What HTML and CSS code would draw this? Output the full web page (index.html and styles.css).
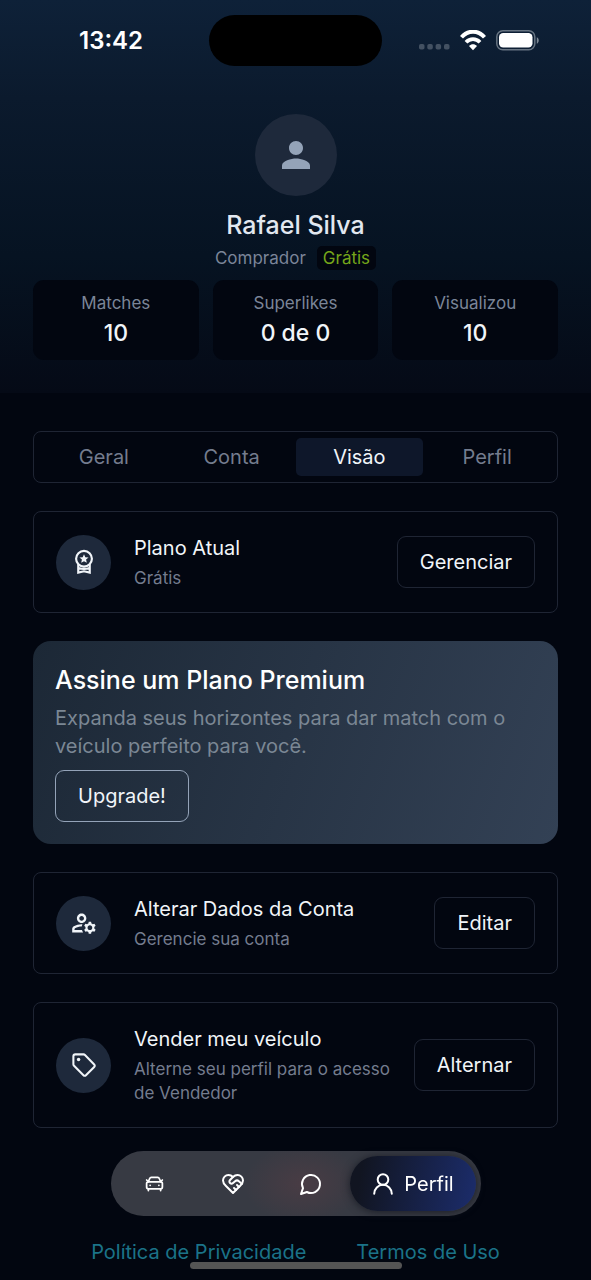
FILE: index.html
```html
<!DOCTYPE html>
<html lang="pt-BR">
<head>
<meta charset="utf-8">
<meta name="viewport" content="width=device-width, initial-scale=1">
<title>Perfil</title>
<link rel="stylesheet" href="styles.css">
</head>
<body>
<header class="hero">
  <div class="status">
    <time class="clock">13:42</time>
    <span class="island"></span>
    <div class="indicators">
      <svg class="signal" viewBox="0 0 31 6" fill="#435162"><rect width="5.5" height="5.5" rx="1.8"/><rect x="8.3" width="5.5" height="5.5" rx="1.8"/><rect x="16.6" width="5.5" height="5.5" rx="1.8"/><rect x="25" width="5.5" height="5.5" rx="1.8"/></svg>
      <svg class="wifi" viewBox="0 0 26 21" fill="none" stroke="#fff"><path d="M1.500 7.200C8-.2 18-.2 24.500 7.200" stroke-width="4"/><path d="M6 12.200c4-4.200 10-4.200 14 0" stroke-width="3.800"/><path d="M9 15.900c2.400-2.300 5.600-2.300 8 0l-4 4.300z" fill="#fff" stroke="none"/></svg>
      <svg class="battery" viewBox="0 0 44 21"><rect x=".8" y=".8" width="38" height="19" rx="6" fill="none" stroke="#667381" stroke-width="1.500"/><rect x="3" y="3" width="33.500" height="14.600" rx="4.200" fill="#fff"/><path d="M40.800 7.300c2.600 1 2.600 5.400 0 6.400z" fill="#7d8894"/></svg>
    </div>
  </div>
  <div class="profile">
    <span class="avatar"><svg viewBox="0 0 24 24" fill="#94a3b8"><path d="M12 12c2.210 0 4-1.790 4-4s-1.790-4-4-4-4 1.790-4 4 1.790 4 4 4zm0 2c-2.670 0-8 1.340-8 4v2h16v-2c0-2.660-5.330-4-8-4z"/></svg></span>
    <h1 class="name">Rafael Silva</h1>
    <p class="role">Comprador <span class="badge">Grátis</span></p>
  </div>
  <dl class="stats">
    <div class="stat"><dt>Matches</dt><dd>10</dd></div>
    <div class="stat"><dt>Superlikes</dt><dd>0 de 0</dd></div>
    <div class="stat"><dt>Visualizou</dt><dd>10</dd></div>
  </dl>
</header>
<main class="content">
  <div class="tabs" role="tablist">
    <button class="tab" role="tab" aria-selected="false">Geral</button>
    <button class="tab" role="tab" aria-selected="false">Conta</button>
    <button class="tab active" role="tab" aria-selected="true">Visão</button>
    <button class="tab" role="tab" aria-selected="false">Perfil</button>
  </div>
  <section class="card">
    <span class="card-icon"><svg viewBox="0 0 24 24" fill="none" stroke="#f1f5f9" stroke-width="2"><circle cx="12" cy="9" r="7.300"/><path d="M6.700 14v7.800l5.300-1.200 5.300 1.200V14M7 17.500c3 1.100 7 1.100 10 0"/><path d="M12 4.800l1.200 2.700 3 .3-2.300 2 .7 2.900-2.600-1.500-2.600 1.500.7-2.900-2.300-2 3-.3z" fill="#f1f5f9" stroke="none"/></svg></span>
    <div class="card-text"><h2>Plano Atual</h2><p>Grátis</p></div>
    <button class="btn">Gerenciar</button>
  </section>
  <section class="premium">
    <h2>Assine um Plano Premium</h2>
    <p>Expanda seus horizontes para dar match com o veículo perfeito para você.</p>
    <button class="btn light">Upgrade!</button>
  </section>
  <section class="card">
    <span class="card-icon"><svg viewBox="1 1 22 22" fill="#f1f5f9"><path d="M4 18v-.65c0-.34.16-.66.41-.81C6.100 15.530 8.030 15 10 15c.03 0 .05 0 .08.010.1-.7.3-1.370.59-1.980-.22-.02-.44-.03-.67-.03-2.420 0-4.680.67-6.610 1.820-.88.52-1.390 1.500-1.390 2.530V20h9.260c-.42-.6-.75-1.280-.97-2H4zM10 12c2.210 0 4-1.790 4-4s-1.790-4-4-4-4 1.790-4 4 1.790 4 4 4zm0-6c1.100 0 2 .9 2 2s-.9 2-2 2-2-.9-2-2 .9-2 2-2zM20.750 16c0-.22-.03-.42-.06-.63l1.140-1.010-1-1.730-1.450.49c-.32-.27-.68-.48-1.080-.63L18 11h-2l-.3 1.490c-.4.15-.76.36-1.080.63l-1.450-.49-1 1.730 1.140 1.010c-.03.21-.06.41-.06.63s.03.42.06.63l-1.140 1.010 1 1.730 1.450-.49c.32.27.68.48 1.080.63L16 21h2l.3-1.490c.4-.15.76-.36 1.080-.63l1.450.49 1-1.730-1.140-1.010c.03-.21.06-.41.06-.63zM17 18c-1.100 0-2-.9-2-2s.9-2 2-2 2 .9 2 2-.9 2-2 2z"/></svg></span>
    <div class="card-text"><h2>Alterar Dados da Conta</h2><p>Gerencie sua conta</p></div>
    <button class="btn">Editar</button>
  </section>
  <section class="card">
    <span class="card-icon"><svg viewBox="0 0 24 24" fill="none" stroke="#f1f5f9" stroke-width="1.900" stroke-linejoin="round"><path d="M2.200 4c0-1 .8-1.800 1.800-1.800h7.500c.6 0 1 .2 1.400.6l8.500 8.700c.7.700.7 1.600 0 2.300l-7.600 7.600c-.7.700-1.600.7-2.300 0l-8.700-8.700c-.4-.4-.6-.8-.6-1.400z"/><circle cx="7" cy="7" r="1.600" fill="#f1f5f9" stroke="none"/></svg></span>
    <div class="card-text"><h2>Vender meu veículo</h2><p>Alterne seu perfil para o acesso de Vendedor</p></div>
    <button class="btn">Alternar</button>
  </section>
</main>
<footer class="legal">
  <a href="#privacidade">Política de Privacidade</a>
  <a href="#termos">Termos de Uso</a>
</footer>
<nav class="dock" aria-label="Principal">
  <a class="dock-item" href="#carros" aria-label="Carros"><svg class="small" viewBox="0 0 24 24" fill="none" stroke="#fff" stroke-width="2" stroke-linecap="round" stroke-linejoin="round"><path d="m21 8-2 2-1.500-3.700A2 2 0 0 0 15.646 5H8.400a2 2 0 0 0-1.903 1.257L5 10 3 8M7 14h.01M17 14h.01M5 18v2M19 18v2"/><rect width="18" height="8" x="3" y="10" rx="2"/></svg></a>
  <a class="dock-item" href="#matches" aria-label="Matches"><svg viewBox="0 0 24 24" fill="none" stroke="#fff" stroke-width="2" stroke-linecap="round" stroke-linejoin="round"><path d="M19 14c1.490-1.460 3-3.210 3-5.500A5.500 5.500 0 0 0 16.500 3c-1.760 0-3 .5-4.500 2-1.500-1.500-2.740-2-4.500-2A5.500 5.500 0 0 0 2 8.500c0 2.300 1.500 4.050 3 5.500l7 7Z"/><path d="M12 5 9.040 7.960a2.170 2.170 0 0 0 0 3.080c.82.820 2.130.850 3 .070l2.070-1.900a2.820 2.820 0 0 1 3.790 0l2.960 2.660M18 15l-2-2M15 18l-2-2"/></svg></a>
  <a class="dock-item" href="#mensagens" aria-label="Mensagens"><svg viewBox="0 0 24 24" fill="none" stroke="#fff" stroke-width="2" stroke-linecap="round" stroke-linejoin="round"><path d="M7.900 20A9 9 0 1 0 4 16.100L2 22Z"/></svg></a>
  <a class="dock-item current" href="#perfil" aria-current="page"><svg viewBox="0 0 24 24" fill="none" stroke="#fff" stroke-width="2" stroke-linecap="round"><circle cx="12" cy="7.500" r="5.300"/><path d="M3.200 21.800c0-5 4-9 8.800-9s8.800 4 8.800 9"/></svg>Perfil</a>
</nav>
<div class="home-bar"></div>
</body>
</html>
```
FILE: styles.css
```css
* { box-sizing: border-box; margin: 0; }
body {
  min-height: 100vh;
  background: #020610;
  color: #f1f5f9;
  font-family: Inter, "Liberation Sans", sans-serif;
  font-size: 20px;
  line-height: 28px;
}
button { font: inherit; color: inherit; background: none; border: 0; }
svg { display: block; }

.hero {
  padding: 15px 33px 33px;
  background: linear-gradient(#0e2138, #0b1a2d 25%, #061322 65%, #050a16);
}
.status { display: grid; grid-template-columns: 1fr 173px 1fr; align-items: center; }
.clock { padding-left: 46px; font-size: 24px; font-weight: 600; color: #fff; }
.island { height: 51px; border-radius: 26px; background: #000; }
.indicators { display: flex; align-items: center; justify-content: flex-end; gap: 10px; padding-right: 18px; }
.signal { width: 31px; height: 6px; margin-top: 13px; }
.wifi { width: 26px; height: 21px; }
.battery { width: 44px; height: 21px; }

.profile { display: flex; flex-direction: column; align-items: center; padding-top: 48px; }
.avatar { display: grid; place-items: center; width: 82px; height: 82px; border-radius: 50%; background: #1e293b; }
.avatar svg { width: 42px; height: 42px; }
.name { margin-top: 12px; font-size: 25px; line-height: 34px; font-weight: 500; color: #e2e8f0; }
.role { display: flex; align-items: center; gap: 11px; margin-top: 4px; font-size: 17px; line-height: 24px; color: #7b8598; }
.badge { padding: 0 6px; border-radius: 5px; background: #020610; color: #75a51a; }

.stats { display: grid; grid-template-columns: repeat(3, 1fr); gap: 14px; margin-top: 10px; }
.stat { padding: 11px 0 10px; border-radius: 11px; background: #020610; text-align: center; }
.stat dt { font-size: 17px; line-height: 24px; color: #7b8598; }
.stat dd { margin-top: 2px; font-size: 23px; line-height: 33px; font-weight: 500; }

.content { display: flex; flex-direction: column; gap: 28px; padding: 38px 33px 0; }
.tabs { display: grid; grid-template-columns: repeat(4, 1fr); padding: 6px; border: 1px solid #1f2534; border-radius: 8px; }
.tab { height: 38px; padding: 0; border-radius: 5px; color: #747c8e; }
.tab.active { background: #0e172a; color: #f1f5f9; }

.card { display: flex; align-items: center; padding: 22px; border: 1px solid #1f2534; border-radius: 8px; }
.card-icon { display: grid; place-items: center; flex: none; width: 55px; height: 55px; border-radius: 50%; background: #1e293b; }
.card-icon svg { width: 26px; height: 26px; }
.card-text { flex: 1; padding: 0 18px 0 23px; }
.card-text h2 { font-size: 20px; font-weight: 400; }
.card-text p { margin-top: 4px; font-size: 17px; line-height: 24px; color: #747c8e; }
.btn { flex: none; height: 52px; padding: 0 22px; border: 1px solid #1f2534; border-radius: 9px; }
.btn.light { border-color: #94a3b8; }

.premium { padding: 22px; border-radius: 18px; background: linear-gradient(110deg, #1c2836, #334155); }
.premium h2 { font-size: 25px; line-height: 34px; font-weight: 500; color: #fff; }
.premium p { margin: 7px 0 10px; color: #7b8794; }
.premium .btn { display: block; }

.legal { display: flex; justify-content: center; gap: 50px; padding-top: 110px; }
.legal a { color: #1b7388; text-decoration: none; }

.dock {
  position: fixed; left: 50%; bottom: 64px; transform: translateX(-50%);
  display: flex; align-items: center; padding: 5px; border-radius: 33px;
  background: radial-gradient(60px 40px at 52% 50%, #493c44, #373a43);
}
.dock-item { display: grid; place-items: center; width: 78px; height: 55px; color: #fff; text-decoration: none; }
.dock-item svg { width: 24px; height: 24px; }
.dock-item svg.small { width: 21px; height: 21px; }
.dock-item.current {
  display: flex; align-items: center; justify-content: center; gap: 9px; width: 126px; border-radius: 28px;
  background: linear-gradient(100deg, #111521 10%, #1b2b67 95%);
  box-shadow: 0 1px 8px #1a1d26;
}
.home-bar { position: fixed; left: 50%; bottom: 11px; transform: translateX(-50%); width: 212px; height: 7px; border-radius: 4px; background: #545454; }
```
